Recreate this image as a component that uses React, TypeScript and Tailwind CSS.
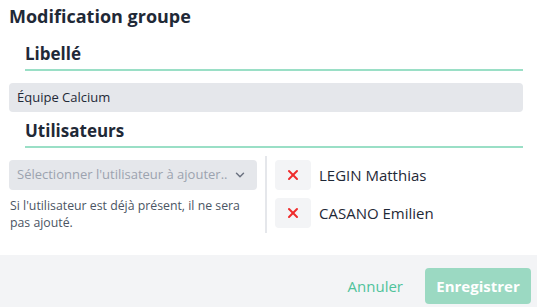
import { ChevronDown, X } from "lucide-react";

const users = ["LEGIN Matthias", "CASANO Emilien"];

export default function App() {
  return (
    <div
      className="w-[537px] h-[307px] bg-white flex flex-col text-[#1f2937]"
      style={{ fontFamily: '"Open Sans", "Noto Sans", sans-serif' }}
    >
      <div className="flex-1 flex flex-col pl-[9px] pr-[14px] pt-[2px]">
        {/* Title */}
        <h1 className="text-[18px] leading-[28px] font-bold">Modification groupe</h1>

        {/* Libellé */}
        <div className="ml-4 mt-[11px] border-b-2 border-[#9adfc6] pb-[2px]">
          <h2 className="text-[17px] leading-[26px] font-bold">Libellé</h2>
        </div>
        <div className="mt-[12px] h-[29px] bg-[#e5e7eb] rounded flex items-center px-2 text-[13px]">
          Équipe Calcium
        </div>

        {/* Utilisateurs */}
        <div className="ml-4 mt-[6px] border-b-2 border-[#9adfc6] pb-[2px]">
          <h2 className="text-[17px] leading-[26px] font-bold">Utilisateurs</h2>
        </div>

        <div className="mt-[8px] flex">
          <div className="w-[248px] pt-[4px]">
            <div className="h-[30px] bg-[#e5e7eb] rounded flex items-center justify-between pl-2 pr-[10px] text-[13px] text-[#9ca3af]">
              <span>Sélectionner l'utilisateur à ajouter..</span>
              <ChevronDown className="w-[14px] h-[14px] text-[#6b7280]" strokeWidth={2.5} />
            </div>
            <p className="mt-[7px] text-[12.3px] leading-[17px] text-[#4b5563] pl-px">
              Si l'utilisateur est déjà présent, il ne sera pas ajouté.
            </p>
          </div>
          <div className="ml-2 w-[2px] h-[77px] bg-[#e5e7eb]"></div>
          <div className="ml-2 flex flex-col gap-2 pt-[4px]">
            {users.map((u) => (
              <div key={u} className="flex items-center gap-2">
                <button className="w-9 h-[30px] bg-[#f3f4f6] rounded flex items-center justify-center">
                  <X className="w-4 h-4 text-[#ef2b2b]" strokeWidth={3} />
                </button>
                <span className="text-[15px]">{u}</span>
              </div>
            ))}
          </div>
        </div>
      </div>

      {/* Footer */}
      <div className="h-[52px] bg-[#f3f4f6] flex items-end justify-end pr-[6px] pb-[3px]">
        <button className="h-[36px] text-[15px] text-[#4fc39b] px-[18px]">Annuler</button>
        <button className="ml-1 w-[106px] h-[36px] bg-[#9bd9c2] rounded text-white font-bold text-[15px]">
          Enregistrer
        </button>
      </div>
    </div>
  );
}
